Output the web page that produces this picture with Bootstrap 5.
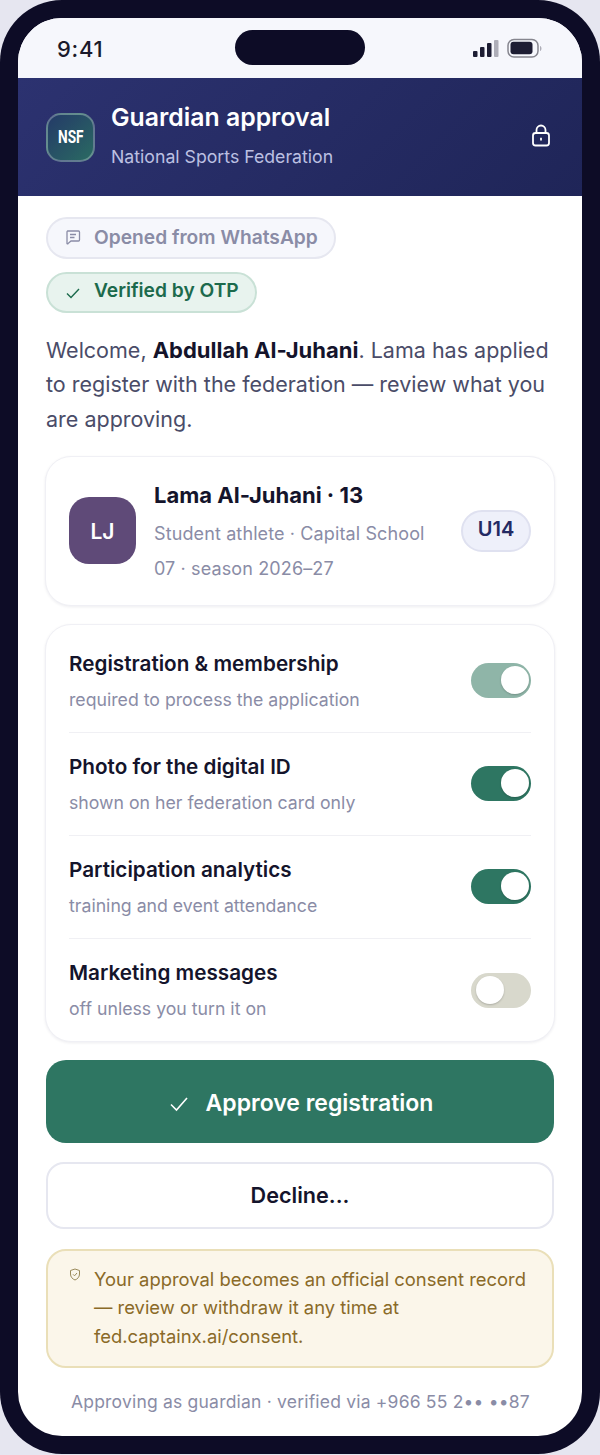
<!DOCTYPE html>
<html lang="en">
  <head>
    <meta charset="UTF-8" />
    <meta name="viewport" content="width=device-width, initial-scale=1.0" />
    <title>Guardian approval</title>
    <link href="https://cdn.jsdelivr.net/npm/bootstrap@5.3.3/dist/css/bootstrap.min.css" rel="stylesheet" />
    <style>
      html, body { margin: 0; background: #e6e6f0; }
      body { font-family: Inter, "Liberation Sans", sans-serif; color: #14142b; width: 600px; height: 1455px; overflow: hidden; }
      .phone-frame { width: 600px; height: 1454px; padding: 18px 18px 18px; background: #0d0c26; border-radius: 62px; }
      .phone-screen { height: 1418px; background: #fff; border-radius: 44px; overflow: hidden; }
      .status-row { height: 60px; background: #f6f7fc; padding: 0 42px 0 39px; position: relative; }
      .clock { font-size: 22px; font-weight: 500; letter-spacing: .7px; color: #1a1a2a; margin-top: 2px; }
      .island { width: 130px; height: 35px; background: #0d0c26; border-radius: 18px; position: absolute; left: 217px; top: 12px; }
      .head-band { height: 118px; padding: 0 31px 0 28px; background: linear-gradient(135deg, #2c3270, #1f2558); }
      .crest { width: 49px; height: 49px; border-radius: 15px; border: 2px solid rgba(255,255,255,.28); background: linear-gradient(135deg, #243a68, #2a6a62); color: #fff; font-family: Roboto, "Liberation Sans", sans-serif; font-weight: 700; font-size: 19px; }
      .crest span { display: inline-block; transform: scaleX(.72); }
      .head-title { font-size: 24.8px; font-weight: 600; color: #fff; line-height: 30px; margin-top: -4px; }
      .head-sub { font-size: 17.7px; color: #bcc0e2; line-height: 24px; margin-top: 13px; }
      .body-pad { padding: 21px 27px 0 28px; }
      .chip { height: 41px; border-radius: 21px; font-weight: 600; font-size: 19.2px; padding: 0 16px 0 17px; gap: 13px; border: 2px solid; }
      .chip-grey { height: 42px; background: #f6f7fc; border-color: #e6e7f0; color: #8a8ca6; padding-bottom: 2px; }
      .chip-green { background: #e8f3ee; border-color: #c9e1d6; color: #1c6a4c; margin-top: 13px; padding-bottom: 5px; }
      .welcome { font-size: 21.5px; line-height: 34.4px; color: #4a4c68; margin: 20px 0 19.3px; }
      .welcome b { color: #14142b; font-weight: 700; font-size: 22px; }
      .panel { width: 510px; margin-left: -1px; background: #fff; border: 1.5px solid #f0f0f5; border-radius: 26px; box-shadow: 0 1px 3px rgba(20,20,60,.08); }
      .kid-panel { height: 150px; padding: 0 23px; }
      .avatar-tile { width: 67px; height: 67px; border-radius: 20px; background: #5f4a78; color: #fff; font-size: 21px; font-weight: 600; margin-right: 18px; padding-top: 2px; }
      .kid-name { font-size: 22px; font-weight: 700; line-height: 30px; color: #14142b; }
      .kid-line { font-size: 18px; line-height: 35px; color: #8a8ca6; letter-spacing: .12px; }
      .age-pill { width: 70px; height: 42px; border-radius: 21px; background: #eef0fa; border: 2px solid #dfe1f0; color: #232a63; font-weight: 600; font-size: 20px; padding-bottom: 3px; }
      .consent-panel { margin-top: 18px; height: 418px; padding: 5px 23px 0; }
      .consent-row { height: 103px; border-bottom: 1.5px solid #f0f0f4; }
      .consent-row:last-child { border-bottom: 0; }
      .consent-name { font-size: 20.7px; font-weight: 600; line-height: 28px; color: #14142b; }
      .consent-note { font-size: 17.7px; line-height: 24px; color: #8a8ca6; margin-top: 10px; }
      .switch-track { width: 60px; height: 35px; border-radius: 18px; padding: 3px 3px; background: #2e7662; }
      .switch-track.locked { background: #8fb5a8; }
      .switch-track.off { background: #d8d8cc; }
      .switch-knob { width: 28px; height: 28px; border-radius: 50%; background: #fff; margin: 0 -1px 0 0; box-shadow: 0 1px 2px rgba(0,0,0,.2); }
      .switch-track.off .switch-knob { margin: 0 0 0 2px; }
      .go-btn { width: 508px; height: 83px; margin-top: 18px; padding: 8px 12px 3px 14px; border-radius: 20px; background: #2e7662; color: #fff; font-size: 23px; font-weight: 600; gap: 17px; border: 0; }
      .go-btn:hover { background: #2e7662; color: #fff; }
      .no-btn { width: 508px; height: 67px; margin-top: 19px; border-radius: 18px; background: #fff; color: #14142b; font-size: 21.6px; font-weight: 600; border: 2px solid #e6e7f0; }
      .notice { margin-top: 20px; width: 508px; height: 119px; border-radius: 20px; background: #fbf6ea; border: 2px solid #eadfb8; padding: 14px 18px 0 21px; color: #8a6a28; font-size: 18.4px; line-height: 28.5px; gap: 13px; }
      .foot-line { margin-top: 22px; font-size: 17.5px; line-height: 24px; color: #8a8ca6; letter-spacing: .2px; text-align: center; white-space: nowrap; }
    </style>
  </head>
  <body>
    <div class="phone-frame">
      <div class="phone-screen">
        <div class="status-row d-flex align-items-center justify-content-between">
          <span class="clock">9:41</span>
          <div class="island"></div>
          <svg width="72" height="20" viewBox="0 0 72 20" style="margin-right: -4px">
            <rect x="1" y="13" width="4.500" height="6" rx="1" fill="#1d1d33" />
            <rect x="8" y="9" width="4.500" height="10" rx="1" fill="#1d1d33" />
            <rect x="15" y="5" width="4.500" height="14" rx="1" fill="#1d1d33" />
            <rect x="22" y="2" width="4.500" height="17" rx="1" fill="#aeaeb8" />
            <rect x="36" y="1.500" width="30" height="17.500" rx="6" fill="none" stroke="#86868f" stroke-width="1.500" />
            <rect x="38.500" y="3.800" width="22" height="12.500" rx="3" fill="#1d1d33" />
            <path d="M68 8c2 .5 2 4.500 0 5z" fill="#aeaeb8" />
          </svg>
        </div>

        <div class="head-band d-flex align-items-center">
          <div class="crest d-flex align-items-center justify-content-center flex-shrink-0"><span>NSF</span></div>
          <div class="ms-3 flex-grow-1">
            <div class="head-title">Guardian approval</div>
            <div class="head-sub">National Sports Federation</div>
          </div>
          <svg width="20" height="23" viewBox="0 0 20 23" fill="none" stroke="#fff" stroke-width="1.800" style="margin-top: -4px">
            <rect x="2" y="9" width="16" height="12.500" rx="2.500" />
            <path d="M5.500 9V6a4.500 4.500 0 0 1 9 0v3" />
            <path d="M10 13.800v2.600" />
          </svg>
        </div>

        <div class="body-pad">
          <div class="d-flex flex-column align-items-start">
            <div class="chip chip-grey d-inline-flex align-items-center">
              <svg width="16" height="16" viewBox="0 0 16 16" fill="none" stroke="#8a8ca6" stroke-width="1.300">
                <path d="M2.500 2h11a1 1 0 0 1 1 1v8a1 1 0 0 1-1 1H6l-3 2.500a.5.5 0 0 1-1-.3V3a1 1 0 0 1 .5-1z" />
                <path d="M5 5.500h6M5 8.500h4.500" />
              </svg>
              Opened from WhatsApp
            </div>
            <div class="chip chip-green d-inline-flex align-items-center">
              <svg width="16" height="16" viewBox="0 0 16 16" fill="none" stroke="#1c6a4c" stroke-width="1.400" style="margin-top: 6px">
                <path d="M2 8.500l4 4 8-8.500" />
              </svg>
              Verified by OTP
            </div>
          </div>

          <p class="welcome">Welcome, <b>Abdullah Al-Juhani</b>. Lama has applied to register with the federation — review what you are approving.</p>

          <div class="panel kid-panel d-flex align-items-center">
            <div class="avatar-tile d-flex align-items-center justify-content-center flex-shrink-0">LJ</div>
            <div class="flex-grow-1" style="margin-top: 5px">
              <div class="kid-name">Lama Al-Juhani · 13</div>
              <div class="kid-line" style="margin-top: 5.500px">Student athlete · Capital School</div>
              <div class="kid-line">07 · season 2026–27</div>
            </div>
            <div class="age-pill d-flex align-items-center justify-content-center flex-shrink-0">U14</div>
          </div>

          <div class="panel consent-panel">
            <div class="consent-row d-flex align-items-center justify-content-between">
              <div>
                <div class="consent-name">Registration &amp; membership</div>
                <div class="consent-note">required to process the application</div>
              </div>
              <div class="switch-track locked d-flex justify-content-end"><div class="switch-knob"></div></div>
            </div>
            <div class="consent-row d-flex align-items-center justify-content-between">
              <div>
                <div class="consent-name">Photo for the digital ID</div>
                <div class="consent-note">shown on her federation card only</div>
              </div>
              <div class="switch-track d-flex justify-content-end"><div class="switch-knob"></div></div>
            </div>
            <div class="consent-row d-flex align-items-center justify-content-between">
              <div>
                <div class="consent-name">Participation analytics</div>
                <div class="consent-note">training and event attendance</div>
              </div>
              <div class="switch-track d-flex justify-content-end"><div class="switch-knob"></div></div>
            </div>
            <div class="consent-row d-flex align-items-center justify-content-between">
              <div>
                <div class="consent-name">Marketing messages</div>
                <div class="consent-note">off unless you turn it on</div>
              </div>
              <div class="switch-track off d-flex justify-content-start"><div class="switch-knob"></div></div>
            </div>
          </div>

          <button class="btn go-btn d-flex align-items-center justify-content-center">
            <svg width="20" height="16" viewBox="0 0 20 16" fill="none" stroke="#fff" stroke-width="1.600">
              <path d="M2 8.500l5.500 5.500L18 2" />
            </svg>
            Approve registration
          </button>
          <button class="btn no-btn d-flex align-items-center justify-content-center">Decline...</button>

          <div class="notice d-flex">
            <svg class="flex-shrink-0" width="12" height="13" viewBox="0 0 12 13" fill="none" stroke="#9a8a5a" stroke-width="1" style="margin-top: 3px">
              <path d="M6 1l4.500 1.500V6c0 3-2 5-4.500 6-2.500-1-4.500-3-4.500-6V2.500z" />
              <path d="M4 6.300l1.500 1.500L8 5" />
            </svg>
            <div>Your approval becomes an official consent record — review or withdraw it any time at fed.captainx.ai/consent.</div>
          </div>

          <div class="foot-line">Approving as guardian · verified via +966 55 2•• ••87</div>
        </div>
      </div>
    </div>
    <script src="https://cdn.jsdelivr.net/npm/bootstrap@5.3.3/dist/js/bootstrap.bundle.min.js"></script>
  </body>
</html>
